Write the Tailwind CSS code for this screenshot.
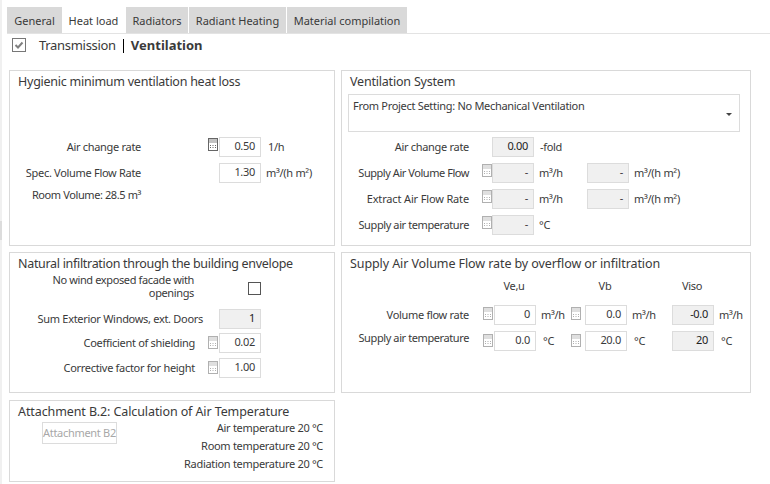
<!DOCTYPE html>
<html lang="en">
<head>
<meta charset="UTF-8">
<title>Heat load</title>
<script src="https://cdn.jsdelivr.net/npm/@tailwindcss/browser@4"></script>
</head>
<body class="relative w-[770px] h-[484px] overflow-hidden bg-white font-['Noto_Sans',sans-serif] text-[11px] tracking-[-0.3px] text-[#3a3a3a]">
<svg class="hidden">
  <symbol id="calc" viewBox="0 0 10 13">
    <rect x="0.5" y="0.5" width="9" height="12" fill="none" stroke="currentColor"/>
    <rect x="1" y="1" width="8" height="4" fill="currentColor" opacity=".4"/>
    <path d="M2 7h1v1H2zM4.5 7h1v1h-1zM7 7h1v1H7zM2 9h1v1H2zM4.5 9h1v1h-1zM7 9h1v1H7z" fill="currentColor"/>
  </symbol>
</svg>

<!-- scroll thumb on the left edge -->
<div class="absolute left-0 top-[221px] w-[2px] h-[19px] bg-[#dcdcdc]"></div>

<div class="h-[484px] border-l-[2px] border-[#f0f0f0] pt-[8px]">
  <!-- tabs -->
  <div class="flex items-end h-[26px] ml-[5px] border-b border-[#e3e3e3] tracking-[0px]">
    <div class="h-[26px] w-[55px] pt-[2px] bg-[#d9d9d9] flex items-center justify-center">General</div>
    <div class="h-[23px] w-[63px] bg-white flex items-center justify-center">Heat load</div>
    <div class="h-[26px] w-[62px] pt-[2px] ml-px bg-[#d9d9d9] flex items-center justify-center">Radiators</div>
    <div class="h-[26px] w-[97px] pt-[2px] ml-px bg-[#d9d9d9] flex items-center justify-center">Radiant Heating</div>
    <div class="h-[26px] w-[120px] pt-[2px] ml-px bg-[#d9d9d9] flex items-center justify-center whitespace-nowrap">Material compilation</div>
  </div>

  <!-- transmission / ventilation -->
  <div class="flex items-center h-[23px] ml-[10px] text-[13px]">
    <svg class="-mt-[1px] w-[14px] h-[14px]" viewBox="0 0 14 14"><rect x="0.5" y="0.5" width="13" height="13" fill="#fff" stroke="#777"/><path d="M3.5 7l2.5 2.5 4.5-5" fill="none" stroke="#808080" stroke-width="2"/></svg>
    <span class="ml-[13px]">Transmission</span>
    <span class="ml-[7px] w-px h-[14px] bg-black"></span>
    <span class="ml-[7px] font-bold tracking-[0px]">Ventilation</span>
  </div>

  <div class="grid grid-cols-[326px_410px] gap-x-[6px] ml-[7px] mt-[13px]">
    <!-- Hygienic -->
    <section class="h-[176px] border border-[#d9d9d9] pt-[1px]">
      <h2 class="ml-[8px] text-[12.5px] leading-[19px] font-normal tracking-[-0.25px]">Hygienic minimum ventilation heat loss</h2>
      <div class="mt-[46px] flex items-center h-[20px]">
        <span class="w-[131px] text-right">Air change rate</span>
        <svg class="ml-[67px] -mt-[5px] w-[10px] h-[13px] text-[#666]"><use href="#calc"/></svg>
        <span class="ml-px w-[42px] h-[20px] border border-[#dcdcdc] text-right pr-[5px] leading-[15px]">0.50</span>
        <span class="ml-[7px]">1/h</span>
      </div>
      <div class="mt-[6px] flex items-center h-[20px]">
        <span class="w-[131px] text-right">Spec. Volume Flow Rate</span>
        <span class="ml-[78px] w-[42px] h-[20px] border border-[#dcdcdc] text-right pr-[5px] leading-[15px]">1.30</span>
        <span class="ml-[5px]">m³/(h m²)</span>
      </div>
      <div class="mt-[2px] w-[131px] text-right leading-[20px] tracking-[-0.4px]">Room Volume: 28.5 m³</div>
    </section>

    <!-- Ventilation System -->
    <section class="h-[176px] border border-[#d9d9d9] pt-[1px]">
      <h2 class="ml-[8px] text-[12.5px] leading-[19px] font-normal tracking-[-0.2px]">Ventilation System</h2>
      <div class="ml-[6px] mt-[3px] w-[392px] h-[38px] border border-[#dcdcdc] pl-[4px] pr-[7px] pt-[3px] flex justify-between">
        <span>From Project Setting: No Mechanical Ventilation</span>
        <span class="mt-[15px] w-0 h-0 border-x-[3px] border-t-[3px] border-x-transparent border-t-[#444]"></span>
      </div>
      <div class="mt-[5px] flex items-center h-[20px]">
        <span class="w-[127px] text-right">Air change rate</span>
        <span class="ml-[23px] w-[42px] h-[20px] border border-[#dcdcdc] bg-[#f0f0f0] text-right pr-[5px] leading-[15px] text-[#222]">0.00</span>
        <span class="ml-[6px]">-fold</span>
      </div>
      <div class="mt-[6px] flex items-center h-[20px]">
        <span class="w-[127px] text-right tracking-[-0.45px]">Supply Air Volume Flow</span>
        <svg class="ml-[13px] -mt-[5px] w-[10px] h-[13px] text-[#b0b0b0]"><use href="#calc"/></svg>
        <span class="w-[42px] h-[20px] border border-[#dcdcdc] bg-[#f0f0f0] text-right pr-[5px] leading-[15px]">-</span>
        <span class="ml-[5px] w-[48px]">m³/h</span>
        <span class="w-[42px] h-[20px] border border-[#dcdcdc] bg-[#f0f0f0] text-right pr-[5px] leading-[15px]">-</span>
        <span class="ml-[5px]">m³/(h m²)</span>
      </div>
      <div class="mt-[6px] flex items-center h-[20px]">
        <span class="w-[127px] text-right tracking-[-0.15px]">Extract Air Flow Rate</span>
        <svg class="ml-[13px] -mt-[5px] w-[10px] h-[13px] text-[#b0b0b0]"><use href="#calc"/></svg>
        <span class="w-[42px] h-[20px] border border-[#dcdcdc] bg-[#f0f0f0] text-right pr-[5px] leading-[15px]">-</span>
        <span class="ml-[5px] w-[48px]">m³/h</span>
        <span class="w-[42px] h-[20px] border border-[#dcdcdc] bg-[#f0f0f0] text-right pr-[5px] leading-[15px]">-</span>
        <span class="ml-[5px]">m³/(h m²)</span>
      </div>
      <div class="mt-[6px] flex items-center h-[20px]">
        <span class="w-[127px] text-right tracking-[-0.4px]">Supply air temperature</span>
        <svg class="ml-[13px] -mt-[5px] w-[10px] h-[13px] text-[#b0b0b0]"><use href="#calc"/></svg>
        <span class="w-[42px] h-[20px] border border-[#dcdcdc] bg-[#f0f0f0] text-right pr-[5px] leading-[15px]">-</span>
        <span class="ml-[5px]">°C</span>
      </div>
    </section>

    <!-- Natural infiltration -->
    <section class="mt-[6px] h-[141px] border border-[#d9d9d9] pt-[1px]">
      <h2 class="ml-[8px] text-[12.5px] leading-[19px] font-normal tracking-[-0.31px]">Natural infiltration through the building envelope</h2>
      <div class="flex items-center h-[26px]">
        <span class="w-[184px] text-right leading-[13px] tracking-[-0.37px]">No wind exposed facade with<br>openings</span>
        <span class="ml-[54px] mt-[4px] w-[13px] h-[13px] border border-[#555]"></span>
      </div>
      <div class="mt-[10px] flex items-center h-[20px]">
        <span class="w-[193px] text-right">Sum Exterior Windows, ext. Doors</span>
        <span class="ml-[16px] w-[42px] h-[20px] border border-[#dcdcdc] bg-[#f0f0f0] text-right pr-[5px] leading-[15px] text-[#222]">1</span>
      </div>
      <div class="mt-[4px] flex items-center h-[20px]">
        <span class="w-[185px] text-right">Coefficient of shielding</span>
        <svg class="ml-[13px] -mt-[1px] w-[10px] h-[13px] text-[#b0b0b0]"><use href="#calc"/></svg>
        <span class="ml-px w-[42px] h-[20px] border border-[#dcdcdc] text-right pr-[5px] leading-[15px]">0.02</span>
      </div>
      <div class="mt-[5px] flex items-center h-[20px]">
        <span class="w-[185px] text-right">Corrective factor for height</span>
        <svg class="ml-[13px] -mt-[1px] w-[10px] h-[13px] text-[#b0b0b0]"><use href="#calc"/></svg>
        <span class="ml-px w-[42px] h-[20px] border border-[#dcdcdc] text-right pr-[5px] leading-[15px]">1.00</span>
      </div>
    </section>

    <!-- Supply air -->
    <section class="mt-[6px] h-[141px] border border-[#d9d9d9] pt-[1px]">
      <h2 class="ml-[8px] text-[12.5px] leading-[19px] font-normal tracking-[-0.09px]">Supply Air Volume Flow rate by overflow or infiltration</h2>
      <div class="mt-[5px] flex h-[16px] items-center">
        <span class="ml-[142px] w-[60px] text-center">Ve,u</span>
        <span class="ml-[31px] w-[60px] text-center">Vb</span>
        <span class="ml-[27px] w-[60px] text-center">Viso</span>
      </div>
      <div class="mt-[11px] flex items-center h-[20px]">
        <span class="w-[127px] text-right">Volume flow rate</span>
        <svg class="ml-[14px] -mt-[3px] w-[10px] h-[13px] text-[#b0b0b0]"><use href="#calc"/></svg>
        <span class="ml-px w-[42px] h-[20px] border border-[#dcdcdc] text-right pr-[5px] leading-[15px]">0</span>
        <span class="ml-[5px] w-[30px]">m³/h</span>
        <svg class="-mt-[3px] w-[10px] h-[13px] text-[#b0b0b0]"><use href="#calc"/></svg>
        <span class="ml-[4px] w-[42px] h-[20px] border border-[#dcdcdc] text-right pr-[5px] leading-[15px]">0.0</span>
        <span class="ml-[5px] w-[40px]">m³/h</span>
        <span class="w-[42px] h-[20px] border border-[#dcdcdc] bg-[#f0f0f0] text-right pr-[5px] leading-[15px] text-[#222]">-0.0</span>
        <span class="ml-[5px]">m³/h</span>
      </div>
      <div class="mt-[6px] flex items-center h-[20px]">
        <span class="w-[127px] text-right -mt-[5px] tracking-[-0.4px]">Supply air temperature</span>
        <svg class="ml-[14px] -mt-[1px] w-[10px] h-[13px] text-[#b0b0b0]"><use href="#calc"/></svg>
        <span class="ml-px w-[42px] h-[20px] border border-[#dcdcdc] text-right pr-[5px] leading-[15px]">0.0</span>
        <span class="ml-[7px] w-[28px]">°C</span>
        <svg class="-mt-[1px] w-[10px] h-[13px] text-[#b0b0b0]"><use href="#calc"/></svg>
        <span class="ml-[4px] w-[42px] h-[20px] border border-[#dcdcdc] text-right pr-[5px] leading-[15px]">20.0</span>
        <span class="ml-[7px] w-[38px]">°C</span>
        <span class="w-[42px] h-[20px] border border-[#dcdcdc] bg-[#f0f0f0] text-right pr-[5px] leading-[15px] text-[#222]">20</span>
        <span class="ml-[7px]">°C</span>
      </div>
    </section>

    <!-- Attachment -->
    <section class="mt-[7px] h-[82px] border border-[#d9d9d9] pt-[1px]">
      <h2 class="ml-[8px] text-[12.5px] leading-[19px] font-normal tracking-[-0.1px]">Attachment B.2: Calculation of Air Temperature</h2>
      <div class="flex justify-between mr-[11px]">
        <span class="ml-[32px] mt-[1px] w-[75px] h-[22px] border border-[#dcdcdc] text-[#a8a8a8] text-center leading-[20px] whitespace-nowrap">Attachment B2</span>
        <div class="text-right leading-[18px] -mt-[2px]">
          <p>Air temperature 20 °C</p>
          <p>Room temperature 20 °C</p>
          <p>Radiation temperature 20 °C</p>
        </div>
      </div>
    </section>
  </div>
</div>
</body>
</html>
